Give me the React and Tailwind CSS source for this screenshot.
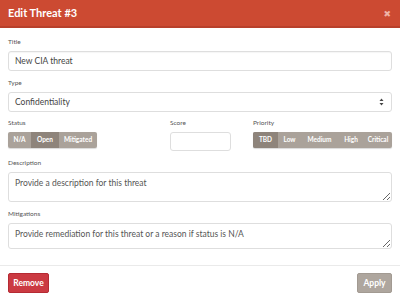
import React from 'react';

const font = { fontFamily: 'Lato, "Open Sans", "DejaVu Sans", sans-serif' };

const Label = ({ children }) => (
    <div className="h-[8px] leading-[8px] text-[6.5px] text-[#555] mb-[5px]">{children}</div>
);

const ButtonGroup = ({ items, active }) => (
    <div className="flex h-[16px] rounded-[2px] overflow-hidden bg-[#aaa29a] shadow-[0_1px_1px_rgba(0,0,0,0.15)]">
        {items.map((item) => (
            <div
                key={item.label}
                className={`${item.label === active ? 'bg-[#8e847b]' : ''} ${item.w} flex items-center justify-center text-[6.5px] font-bold text-white`}
            >
                {item.label}
            </div>
        ))}
    </div>
);

export default function App() {
    return (
        <div className="w-[400px] h-[300px] overflow-hidden bg-white" style={font}>
            {/* Header */}
            <div className="h-[28px] bg-[#cc4a32] border-b-[2px] border-[#b8402b] flex items-center justify-between pl-[8px] pr-[9px]">
                <span className="text-white text-[11px] font-bold">Edit Threat #3</span>
                <span className="text-[#f0b3a6] text-[9px] font-bold leading-none">✖</span>
            </div>

            {/* Body */}
            <div className="px-[8px] pt-[10px] pb-[16px] border-b border-[#eaeaea]">
                <Label>Title</Label>
                <div className="h-[20px] border border-[#dedede] rounded-[3px] flex items-center px-[6px] text-[8.5px] text-[#444] shadow-[inset_0_1px_1px_rgba(0,0,0,0.04)]">
                    New CIA threat
                </div>

                <div className="mt-[8px]">
                    <Label>Type</Label>
                    <div className="h-[20px] border border-[#dedede] rounded-[3px] flex items-center justify-between px-[6px] text-[8.5px] text-[#444]">
                        <span>Confidentiality</span>
                        <svg width="5" height="8" viewBox="0 0 5 8" className="mr-[1px]">
                            <path d="M2.5 0.5 L4.5 3 L0.5 3 Z" fill="#444" />
                            <path d="M2.5 7.5 L4.5 5 L0.5 5 Z" fill="#444" />
                        </svg>
                    </div>
                </div>

                <div className="mt-[7px] grid grid-cols-[154px_75px_1fr] gap-x-[8px]">
                    <div>
                        <Label>Status</Label>
                        <div className="w-[89px]">
                            <ButtonGroup
                                active="Open"
                                items={[
                                    { label: 'N/A', w: 'w-[23px]' },
                                    { label: 'Open', w: 'w-[28px]' },
                                    { label: 'Mitigated', w: 'flex-1' },
                                ]}
                            />
                        </div>
                    </div>
                    <div>
                        <Label>Score</Label>
                        <div className="w-[61px] h-[19px] border border-[#dedede] rounded-[3px]" />
                    </div>
                    <div>
                        <Label>Priority</Label>
                        <ButtonGroup
                            active="TBD"
                            items={[
                                { label: 'TBD', w: 'w-[25px]' },
                                { label: 'Low', w: 'w-[23px]' },
                                { label: 'Medium', w: 'w-[37px]' },
                                { label: 'High', w: 'w-[26px]' },
                                { label: 'Critical', w: 'flex-1' },
                            ]}
                        />
                    </div>
                </div>

                <div className="mt-[8px]">
                    <Label>Description</Label>
                    <textarea
                        className="block w-full h-[30px] border border-[#dedede] rounded-[3px] px-[6px] py-[4px] text-[8.5px] leading-[12px] placeholder:text-[#555] outline-none"
                        placeholder="Provide a description for this threat"
                    />
                </div>

                <div className="mt-[8px]">
                    <Label>Mitigations</Label>
                    <textarea
                        className="block w-full h-[26px] border border-[#dedede] rounded-[3px] px-[6px] py-[4px] text-[8.5px] leading-[12px] placeholder:text-[#555] outline-none"
                        placeholder="Provide remediation for this threat or a reason if status is N/A"
                    />
                </div>
            </div>

            {/* Footer */}
            <div className="flex justify-between px-[8px] pt-[7px]">
                <button className="h-[20px] w-[41px] bg-[#cb3a42] border border-[#b52a33] rounded-[2px] text-white text-[8.5px] font-bold">
                    Remove
                </button>
                <button className="h-[20px] w-[35px] bg-[#aea69e] border border-[#a29a92] rounded-[2px] text-white text-[8.5px] font-bold">
                    Apply
                </button>
            </div>
        </div>
    );
}
